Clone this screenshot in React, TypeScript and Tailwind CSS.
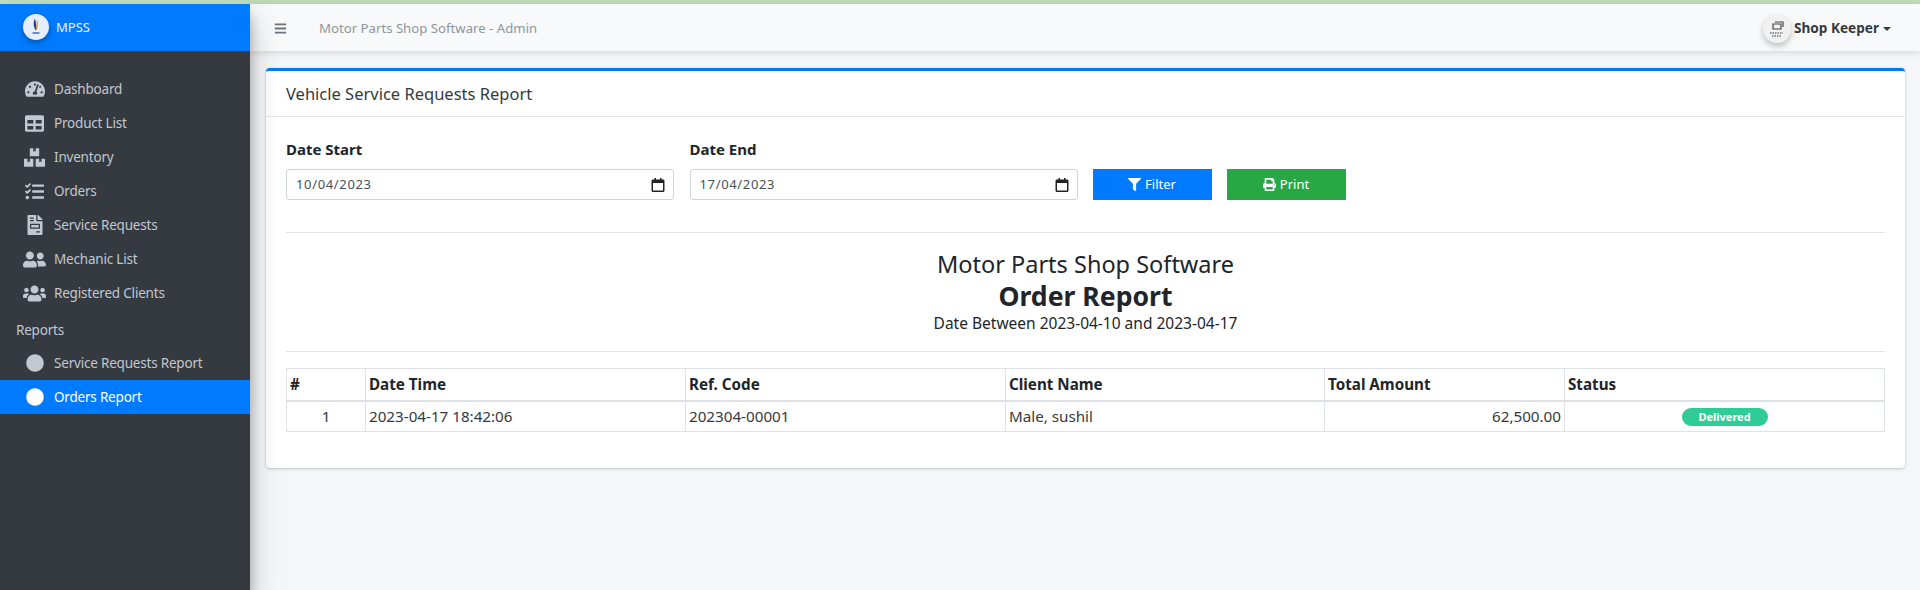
import type { ReactNode } from "react"
import {
  FaBars,
  FaBoxes,
  FaCircle,
  FaFileInvoice,
  FaFilter,
  FaPrint,
  FaTable,
  FaTachometerAlt,
  FaTasks,
  FaUserFriends,
  FaUsers,
} from "react-icons/fa"

const mainLinks = [
  { label: "Dashboard", icon: <FaTachometerAlt className="text-[20px]" /> },
  { label: "Product List", icon: <FaTable className="text-[19px]" /> },
  { label: "Inventory", icon: <FaBoxes className="text-[21px]" /> },
  { label: "Orders", icon: <FaTasks className="text-[19px]" /> },
  { label: "Service Requests", icon: <FaFileInvoice className="text-[20px]" /> },
  { label: "Mechanic List", icon: <FaUserFriends className="text-[23px]" /> },
  { label: "Registered Clients", icon: <FaUsers className="text-[23px]" /> },
]

function NavRow({ icon, label, active }: { icon: ReactNode; label: string; active?: boolean }) {
  return (
    <div className={`flex h-[34px] items-center pl-5 ${active ? "bg-[#007bff] text-white" : "text-[#c2c7d0]"}`}>
      <span className="flex w-[29px] shrink-0 justify-center">{icon}</span>
      <span className="ml-[5px] text-[13.5px] tracking-[-0.2px]">{label}</span>
    </div>
  )
}

function DateField({ label, value }: { label: string; value: string }) {
  return (
    <div className="flex w-[388px] flex-col">
      <label className="mb-[9px] text-[15px] leading-[22px] font-bold text-[#212529]">{label}</label>
      <div className="flex h-[31px] items-center justify-between rounded-[3px] border border-[#ced4da] bg-white pr-[8px] pl-[9px] text-[13px] text-[#495057]">
        <span className="tracking-[0.65px]">{value}</span>
        <svg width="14" height="14" viewBox="0 0 14 14" className="text-[#222]">
          <path fill="currentColor" d="M2 1.500h1.500V0h1.500v1.500h4V0h1.500v1.500H12c.8 0 1.500.7 1.500 1.500v9.500c0 .8-.7 1.500-1.500 1.500H2c-.8 0-1.500-.7-1.500-1.500V3c0-.8.7-1.500 1.500-1.500zM2 5v7.500h10V5H2z" />
        </svg>
      </div>
    </div>
  )
}

function LogoMark() {
  return (
    <svg viewBox="0 0 26 26" className="-mt-[2px] h-[26px] w-[26px] rounded-full bg-[#e6edfb] shadow-[0_3px_6px_rgba(0,0,0,0.3)]">
      <path fill="#1f3f93" d="M11.800 4.500c-1.800 3.500-1.300 7.500.4 11.500h1.400c-.5-4-.4-8-1.800-11.500z" />
      <path fill="#dd8f2b" d="M13.800 5c1.500 3.500 1.200 7.500 0 11h-1.200c.8-3.500 1.200-7.500 1.200-11z" />
      <rect x="9.500" y="18" width="7" height="2" fill="#7189c9" />
    </svg>
  )
}

function UserMark() {
  return (
    <svg viewBox="0 0 28 28" className="h-[28px] w-[28px] rounded-full bg-[#f1f1f1] shadow-[0_3px_6px_rgba(0,0,0,0.25)]">
      <path fill="none" stroke="#444" strokeWidth="1.200" d="M10 9h8v5h-8zM12 7h8v5" />
      <path stroke="#333" strokeWidth="1.200" strokeDasharray="1.500 1" d="M7 18h13M9 21h9" />
    </svg>
  )
}

export default function App() {
  return (
    <div className="flex h-[590px] w-[1920px] flex-col overflow-hidden bg-[#f4f6f9] font-['Noto_Sans',sans-serif] text-[#212529]">
      <div className="h-[4px] shrink-0 bg-[#c3dfbc]" />
      <div className="flex min-h-0 flex-1">
        <aside className="z-20 w-[250px] shrink-0 bg-[#343a40] shadow-[0_14px_28px_rgba(0,0,0,0.25),0_10px_10px_rgba(0,0,0,0.22)]">
          <div className="flex h-[47px] items-center gap-[7px] bg-[#007bff] pl-[23px] text-[13px] text-white/90">
            <LogoMark />
            <span>MPSS</span>
          </div>
          <nav className="pt-[21px]">
            {mainLinks.map((link) => (
              <NavRow key={link.label} icon={link.icon} label={link.label} />
            ))}
            <div className="mt-[4px] flex h-[32px] items-center pl-4 text-[13.5px] tracking-[-0.2px] text-[#c2c7d0]">Reports</div>
            <NavRow icon={<FaCircle className="text-[18px]" />} label="Service Requests Report" />
            <NavRow active icon={<FaCircle className="text-[18px]" />} label="Orders Report" />
          </nav>
        </aside>

        <div className="flex min-w-0 flex-1 flex-col">
          <header className="flex h-[47px] shrink-0 items-center bg-[#f8f9fa] pt-[2px] pr-[29px] pl-6 shadow-[0_1px_8px_rgba(0,0,0,0.15)]">
            <FaBars className="text-[13px] text-[#6c757d]" />
            <span className="ml-[32px] text-[13.2px] text-[#8f969c]">Motor Parts Shop Software - Admin</span>
            <div className="ml-auto flex items-center gap-[3px] text-[13.6px] font-bold text-[#343a40]">
              <UserMark />
              <span>Shop Keeper</span>
              <span className="ml-[1px] h-0 w-0 border-x-[4px] border-t-[4px] border-x-transparent border-t-[#343a40]" />
            </div>
          </header>

          <main className="pt-[17px] pr-[15px] pl-4">
            <section className="rounded-[4px] border-t-[3px] border-[#007bff] bg-white shadow-[0_0_1px_rgba(0,0,0,0.13),0_1px_3px_rgba(0,0,0,0.2)]">
              <div className="flex h-[46px] items-center border-b border-black/10 px-5 pt-[2px] text-[16.5px] leading-none text-[#343a40]">
                Vehicle Service Requests Report
              </div>
              <div className="px-5 pt-[21px] pb-[36px]">
                <div className="flex items-end">
                  <DateField label="Date Start" value="10/04/2023" />
                  <div className="ml-[15.5px]">
                    <DateField label="Date End" value="17/04/2023" />
                  </div>
                  <button className="ml-[15px] flex h-[31px] w-[119px] items-center justify-center gap-1 bg-[#007bff] text-[13px] text-white">
                    <FaFilter className="text-[13px]" /> Filter
                  </button>
                  <button className="ml-[15px] flex h-[31px] w-[119px] items-center justify-center gap-1 bg-[#28a745] text-[13px] text-white">
                    <FaPrint className="text-[13px]" /> Print
                  </button>
                </div>

                <hr className="mt-[32px] border-black/10" />

                <div className="pt-[15px] pb-[17px] text-center">
                  <div className="text-[23.500px] leading-[32px]">Motor Parts Shop Software</div>
                  <div className="text-[26.600px] leading-[32px] font-bold">Order Report</div>
                  <div className="text-[15.500px] leading-[22px]">Date Between 2023-04-10 and 2023-04-17</div>
                </div>

                <hr className="border-black/10" />

                <table className="mt-[16px] w-full table-fixed border-collapse text-[15.200px]">
                  <colgroup>
                    <col className="w-[79px]" />
                    <col className="w-[320px]" />
                    <col className="w-[320px]" />
                    <col className="w-[319px]" />
                    <col className="w-[240px]" />
                    <col />
                  </colgroup>
                  <thead>
                    <tr className="h-[32px] border-b-2 border-[#dee2e6] text-left">
                      {["#", "Date Time", "Ref. Code", "Client Name", "Total Amount", "Status"].map((h) => (
                        <th key={h} className="border border-b-2 border-[#dee2e6] px-[3px] py-0 font-bold">
                          {h}
                        </th>
                      ))}
                    </tr>
                  </thead>
                  <tbody>
                    <tr className="h-[31px] text-[#343a40]">
                      <td className="border border-[#dee2e6] px-[3px] text-center">1</td>
                      <td className="border border-[#dee2e6] px-[3px]">2023-04-17 18:42:06</td>
                      <td className="border border-[#dee2e6] px-[3px]">202304-00001</td>
                      <td className="border border-[#dee2e6] px-[3px]">Male, sushil</td>
                      <td className="border border-[#dee2e6] px-[3px] text-right">62,500.00</td>
                      <td className="border border-[#dee2e6] px-[3px] text-center">
                        <span className="relative -top-[1px] inline-block h-[18px] w-[86px] rounded-full bg-[#2fcc98] text-center align-middle text-[11px] leading-[18px] font-bold text-white">
                          Delivered
                        </span>
                      </td>
                    </tr>
                  </tbody>
                </table>
              </div>
            </section>
          </main>
        </div>
      </div>
    </div>
  )
}
